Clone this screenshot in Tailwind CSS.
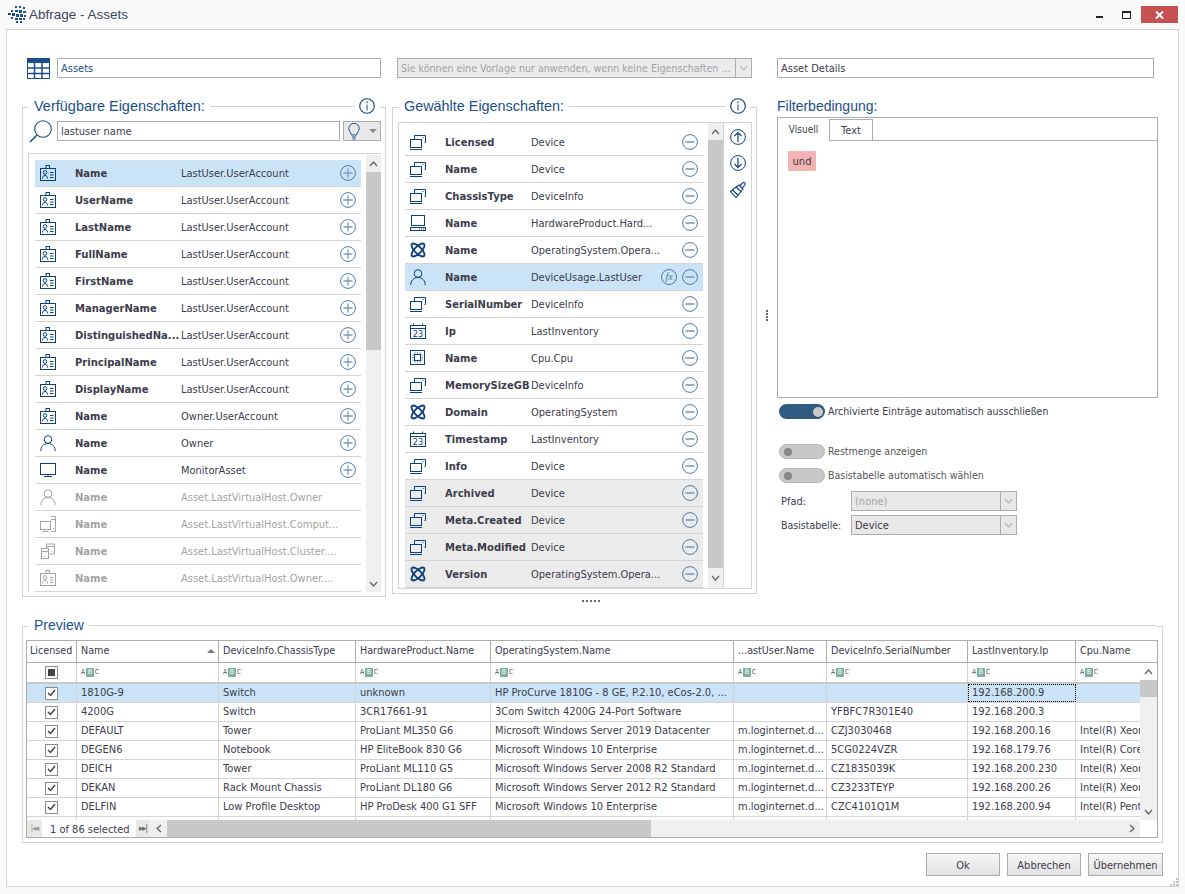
<!DOCTYPE html>
<html lang="de">
<head>
    <meta charset="UTF-8">
    <title>Abfrage - Assets</title>
    <script src="https://cdn.jsdelivr.net/npm/@tailwindcss/browser@4"></script>
</head>
<body class="bg-[#fafafa] text-[#3c3c4a] text-[11px] font-['DejaVu_Sans_Condensed','DejaVu_Sans',sans-serif]">

<!-- icon sprites -->
<svg class="hidden">
    <symbol id="i-badge" viewBox="0 0 16 16"><g fill="none" stroke="currentColor"><rect x=".5" y="3.5" width="15" height="12"/><rect x="6" y=".5" width="3.5" height="3"/><circle cx="5" cy="7.5" r="1.8"/><path d="M2.5 13.5c0-2 1-3 2.5-3s2.5 1 2.5 3M10 7.5h3.500M10 10h3.500M10 12.500h3.500"/></g></symbol>
    <symbol id="i-device" viewBox="0 0 16 16"><g fill="none" stroke="currentColor"><rect x=".5" y="5.500" width="11" height="8"/><path d="M0 15.500h12M4.500 5V1.500h11v7h-1M12.500 3.500h1"/></g></symbol>
    <symbol id="i-hw" viewBox="0 0 16 16"><g fill="none" stroke="currentColor"><rect x="1.500" y=".5" width="13" height="10"/><rect x=".5" y="12.500" width="15" height="3"/><path d="M9 14h1M11 14h1M13 14h1"/></g></symbol>
    <symbol id="i-os" viewBox="0 0 16 16"><g fill="none" stroke="currentColor" stroke-width="1.800"><ellipse cx="8" cy="8" rx="8.500" ry="3.400" transform="rotate(45 8 8)"/><ellipse cx="8" cy="8" rx="8.500" ry="3.400" transform="rotate(-45 8 8)"/></g></symbol>
    <symbol id="i-user" viewBox="0 0 16 16"><g fill="none" stroke="currentColor"><circle cx="8" cy="4.500" r="3.800"/><path d="M.8 16c0-4.500 3-7.500 7.200-7.500s7.200 3 7.200 7.500"/></g></symbol>
    <symbol id="i-cal" viewBox="0 0 16 16"><g fill="none" stroke="currentColor"><rect x=".5" y="2.500" width="15" height="13"/><path d="M.5 5.500h15M3.500 .5v2M12.500 .5v2"/></g><text x="8" y="14" font-size="9" text-anchor="middle" fill="currentColor" stroke="none">23</text></symbol>
    <symbol id="i-cpu" viewBox="0 0 16 16"><g fill="none" stroke="currentColor"><rect x=".5" y=".5" width="14" height="14"/><rect x="4.500" y="4.500" width="6" height="6"/><path d="M5 2.500v1M7.500 2.500v1M10 2.500v1M5 11.500v1M7.500 11.500v1M10 11.500v1M2.500 5h1M2.500 7.500h1M2.500 10h1M11.500 5h1M11.500 7.500h1M11.500 10h1"/></g></symbol>
    <symbol id="i-monitor" viewBox="0 0 16 16"><g fill="none" stroke="currentColor"><rect x=".5" y="1.500" width="15" height="11"/><path d="M8 12.500v2M4 14.500h8"/></g></symbol>
    <symbol id="i-computer" viewBox="0 0 16 16"><g fill="none" stroke="currentColor"><rect x=".5" y="5.500" width="10" height="8"/><path d="M2.500 15.500h6M11 .5h4.500v15H11M11 3.500h4.500M13 12.500h1"/></g></symbol>
    <symbol id="i-cluster" viewBox="0 0 16 16"><g fill="none" stroke="currentColor"><rect x="1.500" y="5.500" width="7" height="10"/><path d="M1.500 8.500h7M6.500 5V1h8v10h-5M6.500 3.500h8M4.500 13h1M11.500 8.500h1"/></g></symbol>
    <symbol id="i-plus" viewBox="0 0 16 16"><circle cx="8" cy="8" r="7.400" fill="none" stroke="#4f7aa5"/><path d="M8 3.500v9M3.500 8h9" stroke="#7d9bb8" stroke-width="1.300"/></symbol>
    <symbol id="i-minus" viewBox="0 0 16 16"><circle cx="8" cy="8" r="7.400" fill="none" stroke="#4f7aa5"/><path d="M3.500 8h9" stroke="#7d9bb8" stroke-width="1.600"/></symbol>
    <symbol id="i-info" viewBox="0 0 16 16"><circle cx="8" cy="8" r="7.300" fill="none" stroke="#0d3f78" stroke-width="1.100"/><path d="M8 6.500v6" stroke="#5f86ad" stroke-width="1.500"/><circle cx="8" cy="4.200" r="1" fill="#5f86ad"/></symbol>
    <symbol id="i-up" viewBox="0 0 16 16"><g fill="none" stroke="#0d3f78"><circle cx="8" cy="8" r="7.400"/><path d="M8 13V3.500M4.500 7 8 3.500 11.500 7" stroke-width="1.200"/></g></symbol>
    <symbol id="i-down" viewBox="0 0 16 16"><g fill="none" stroke="#0d3f78"><circle cx="8" cy="8" r="7.400"/><path d="M8 3v9.500M4.500 9 8 12.500 11.500 9" stroke-width="1.200"/></g></symbol>
    <symbol id="i-brush" viewBox="0 0 16 16"><g fill="none" stroke="#0d3f78" stroke-width="1.100"><path d="M.5 9.500 6 5l5 4.500-5 6-5.500-6zM6 5l3-2 4 4-2 2.500M2.500 8 8 13"/><path d="M10 3.500 13 .8c1.500-.8 2.700.5 2 2l-2.500 3"/></g></symbol>
</svg>

<div class="w-[1185px] h-[894px] flex flex-col overflow-hidden relative">
    <!-- title bar -->
    <div class="h-[29px] shrink-0 flex items-start">
        <svg class="ml-[8px] mt-[6px] w-[18px] h-[17px] text-[#1c4f8a]" viewBox="0 0 18 17" fill="currentColor">
            <rect x="7" y="0" width="2" height="2"/><rect x="11" y="0" width="2" height="2"/><rect x="15" y="1" width="2" height="2"/>
            <rect x="3" y="4" width="2" height="2"/><rect x="7" y="4" width="3" height="2"/><rect x="11" y="4" width="3" height="3"/><rect x="15" y="5" width="3" height="2"/>
            <rect x="0" y="7" width="3" height="2"/><rect x="4" y="7" width="3" height="3"/><rect x="8" y="8" width="3" height="3"/><rect x="12" y="8" width="3" height="3"/><rect x="16" y="9" width="2" height="2"/>
            <rect x="3" y="11" width="2" height="2"/><rect x="7" y="12" width="3" height="2"/><rect x="11" y="12" width="3" height="2"/><rect x="15" y="12" width="2" height="2"/>
            <rect x="8" y="15" width="2" height="2"/><rect x="12" y="15" width="2" height="2"/>
        </svg>
        <span class="ml-[3px] mt-[5px] text-[13.500px] leading-[20px] text-[#3d4757] font-['Liberation_Sans',sans-serif]">Abfrage - Assets</span>
        <div class="ml-auto flex items-start">
            <div class="w-[7px] h-[2px] bg-[#222] mt-[16px]"></div>
            <div class="w-[9px] h-[8px] border border-[#222] border-t-2 ml-[19px] mt-[11px]"></div>
            <div class="w-[37px] h-[17px] bg-[#c75050] ml-[10px] mt-[6px] mr-[7px] flex items-center justify-center">
                <svg class="w-[9px] h-[8px]" viewBox="0 0 9 8"><path d="M1 .5 8 7.500M8 .5 1 7.500" stroke="#fff" stroke-width="2"/></svg>
            </div>
        </div>
    </div>

    <!-- main panel -->
    <div class="mx-[6px] w-[1173px] h-[858px] shrink-0 bg-white border border-[#d4d4d4] px-[15px] pt-[28px]">
        <!-- top row -->
        <div class="flex h-[21px] pl-[5px]">
            <svg class="w-[23px] h-[21px] text-[#1c4f8a]" viewBox="0 0 23 21"><rect x=".5" y=".5" width="22" height="20" fill="none" stroke="currentColor"/><rect x="0" y="0" width="23" height="5" fill="currentColor"/><path d="M0 10h23M0 15.500h23M7.500 5v16M15 5v16" stroke="currentColor" stroke-width="1.500"/></svg>
            <input class="ml-[7px] w-[324px] h-[20px] border border-[#acacac] px-[3px] pt-px text-[#1c4f8a] outline-none" value="Assets">
            <div class="ml-[16px] w-[355px] h-[20px] border border-[#acacac] bg-[#ebebeb] flex items-center text-[#a3a3a3] text-[10.600px] pl-[3px]">
                <span class="flex-1 whitespace-nowrap overflow-hidden pt-px">Sie können eine Vorlage nur anwenden, wenn keine Eigenschaften ...</span>
                <span class="w-[16px] h-full border-l border-[#acacac] flex items-center justify-center"><svg class="w-[9px] h-[6px]" viewBox="0 0 9 6"><path d="M1 1l3.500 4L8 1" fill="none" stroke="#c4c4c4" stroke-width="1.300"/></svg></span>
            </div>
            <input class="ml-[25px] w-[377px] h-[20px] border border-[#acacac] px-[3px] pt-px outline-none" value="Asset Details">
        </div>

        <!-- three columns -->
        <div class="flex mt-[19px] h-[495px]">
            <!-- available -->
            <div class="w-[364px] flex flex-col">
                <div class="flex items-center h-[16px]">
                    <div class="w-[7px] h-[7px] border-l border-t border-[#d4d4d4] self-end"></div>
                    <span class="mx-[5px] text-[14.500px] leading-[16px] text-[#1c4f8a] whitespace-nowrap font-['Liberation_Sans',sans-serif]">Verfügbare Eigenschaften:</span>
                    <div class="flex-1 h-px bg-[#d4d4d4]"></div>
                    <svg class="w-[16px] h-[16px] mx-[4px]"><use href="#i-info"/></svg>
                    <div class="w-[7px] h-[7px] border-r border-t border-[#d4d4d4] self-end"></div>
                </div>
                <div class="flex-1 border-x border-b border-[#d4d4d4] flex flex-col pt-[7px] pb-[4px]">
                    <div class="flex h-[20px] pl-[6px]">
                        <svg class="w-[23px] h-[23px] -mt-[1px]" viewBox="0 0 23 23"><g fill="none" stroke="#1c4f8a"><circle cx="14" cy="9" r="8.300" stroke-width="1.100"/><path d="M8 15 1 22" stroke-width="1.600"/></g></svg>
                        <input class="ml-[5px] w-[283px] h-[20px] border border-[#acacac] px-[3px] outline-none" value="lastuser name">
                        <div class="ml-[3px] w-[38px] h-[20px] border border-[#acacac] bg-[#e8e8e8] flex items-center">
                            <svg class="ml-[4px] w-[12px] h-[17px]" viewBox="0 0 12 17"><path d="M3.500 12C3 9 .8 8.500.8 5.500a5.200 5.200 0 0 1 10.400 0c0 3-2.200 3.500-2.700 6.500zM4 14h4M4.500 16h3" fill="none" stroke="#1c4f8a"/></svg>
                            <span class="ml-[9px] w-0 h-0 border-x-[4px] border-x-transparent border-t-[4px] border-t-[#8a8a8a]"></span>
                        </div>
                    </div>
                    <div class="ml-[5px] mt-[12px] w-[353px] flex-1 border-t border-l border-[#d4d4d4] flex overflow-hidden">
                        <div id="availList" class="ml-[6px] mt-[6px] w-[326px] overflow-hidden"></div>
                        <div class="ml-[5px] mt-[1px] w-[15px] bg-[#efefef] flex flex-col">
                            <div class="h-[17px] flex items-center justify-center"><svg class="w-[9px] h-[6px]" viewBox="0 0 9 6"><path d="M1 5l3.500-4L8 5" fill="none" stroke="#666" stroke-width="1.300"/></svg></div>
                            <div class="h-[178px] bg-[#c8c8c8]"></div>
                            <div class="mt-auto h-[17px] flex items-center justify-center"><svg class="w-[9px] h-[6px]" viewBox="0 0 9 6"><path d="M1 1l3.500 4L8 1" fill="none" stroke="#666" stroke-width="1.300"/></svg></div>
                        </div>
                    </div>
                </div>
            </div>

            <!-- selected -->
            <div class="ml-[6px] w-[365px] flex flex-col">
                <div class="flex items-center h-[16px]">
                    <div class="w-[7px] h-[7px] border-l border-t border-[#d4d4d4] self-end"></div>
                    <span class="mx-[5px] text-[14.400px] leading-[16px] text-[#1c4f8a] whitespace-nowrap font-['Liberation_Sans',sans-serif]">Gewählte Eigenschaften:</span>
                    <div class="flex-1 h-px bg-[#d4d4d4]"></div>
                    <svg class="w-[16px] h-[16px] mx-[4px]"><use href="#i-info"/></svg>
                    <div class="w-[7px] h-[7px] border-r border-t border-[#d4d4d4] self-end"></div>
                </div>
                <div class="flex-1 border-x border-b border-[#d4d4d4] pt-[8px] pb-[4px] flex flex-col">
                    <div class="ml-[5px] w-[354px] flex-1 border border-[#d4d4d4] flex overflow-hidden">
                        <div id="selList" class="ml-[6px] mt-[6px] w-[298px] overflow-hidden"></div>
                        <div class="ml-[5px] w-[15px] bg-[#efefef] flex flex-col">
                            <div class="h-[17px] flex items-center justify-center"><svg class="w-[9px] h-[6px]" viewBox="0 0 9 6"><path d="M1 5l3.500-4L8 5" fill="none" stroke="#666" stroke-width="1.300"/></svg></div>
                            <div class="flex-1 bg-[#c8c8c8]"></div>
                            <div class="h-[20px] flex items-center justify-center"><svg class="w-[9px] h-[6px]" viewBox="0 0 9 6"><path d="M1 1l3.500 4L8 1" fill="none" stroke="#666" stroke-width="1.300"/></svg></div>
                        </div>
                        <div class="flex-1 border-l border-[#d4d4d4] flex flex-col items-center pt-[6px]">
                            <svg class="w-[16px] h-[16px]"><use href="#i-up"/></svg>
                            <svg class="w-[16px] h-[16px] mt-[10px]"><use href="#i-down"/></svg>
                            <svg class="w-[16px] h-[16px] mt-[11px]"><use href="#i-brush"/></svg>
                        </div>
                    </div>
                </div>
            </div>

            <!-- splitter -->
            <div class="w-[20px] flex flex-col items-center pt-[212px] gap-[1px]">
                <div class="w-[2px] h-[2px] bg-[#666]"></div><div class="w-[2px] h-[2px] bg-[#666]"></div><div class="w-[2px] h-[2px] bg-[#666]"></div><div class="w-[2px] h-[2px] bg-[#666]"></div>
            </div>

            <!-- filter -->
            <div class="w-[381px] flex flex-col">
                <div class="h-[16px] text-[14px] leading-[16px] text-[#1c4f8a] font-['Liberation_Sans',sans-serif]">Filterbedingung:</div>
                <div class="mt-[3px] h-[281px] border border-[#acacac] flex flex-col">
                    <div class="flex h-[23px] shrink-0">
                        <div class="w-[51px] text-center leading-[24px] text-[10px]">Visuell</div>
                        <div class="w-[44px] mt-[1px] border border-[#acacac] text-center leading-[22px]">Text</div>
                        <div class="flex-1 border-b border-[#acacac]"></div>
                    </div>
                    <div class="ml-[10px] mt-[10px] w-[28px] h-[20px] bg-[#f4b4b4] rounded-[1px] text-center leading-[22px]">und</div>
                </div>
                <div class="flex items-center mt-[6px] ml-[2px] h-[15px] gap-[3px] text-[10.500px]">
                    <div class="w-[46px] h-[15px] rounded-full bg-[#2f5b80] flex items-center justify-end pr-[2px]"><div class="w-[10px] h-[10px] rounded-full bg-[#c8c8c8]"></div></div>
                    <span class="pt-px">Archivierte Einträge automatisch ausschließen</span>
                </div>
                <div class="flex items-center mt-[25px] ml-[2px] h-[15px] gap-[3px] text-[#555] text-[10.500px]">
                    <div class="w-[46px] h-[15px] rounded-full bg-[#c8c8c8] border border-[#b4b4b4] flex items-center pl-[4px]"><div class="w-[8px] h-[8px] rounded-full bg-[#888]"></div></div>
                    <span class="pt-px">Restmenge anzeigen</span>
                </div>
                <div class="flex items-center mt-[9px] ml-[2px] h-[15px] gap-[3px] text-[#555] text-[10.500px]">
                    <div class="w-[46px] h-[15px] rounded-full bg-[#c8c8c8] border border-[#b4b4b4] flex items-center pl-[4px]"><div class="w-[8px] h-[8px] rounded-full bg-[#888]"></div></div>
                    <span class="pt-px">Basistabelle automatisch wählen</span>
                </div>
                <div class="flex items-center mt-[8px] pl-[4px] h-[20px]">
                    <span class="w-[70px] pt-[2px]">Pfad:</span>
                    <div class="w-[166px] h-[20px] border border-[#acacac] bg-[#e8e8e8] flex items-center pl-[3px] text-[#a3a3a3]">
                        <span class="flex-1 pt-[2px]">(none)</span>
                        <span class="w-[16px] h-full border-l border-[#acacac] flex items-center justify-center"><svg class="w-[9px] h-[6px]" viewBox="0 0 9 6"><path d="M1 1l3.500 4L8 1" fill="none" stroke="#b8b8b8" stroke-width="1.300"/></svg></span>
                    </div>
                </div>
                <div class="flex items-center mt-[4px] pl-[4px] h-[20px]">
                    <span class="w-[70px] pt-[2px] whitespace-nowrap text-[10.500px]">Basistabelle:</span>
                    <div class="w-[166px] h-[20px] border border-[#acacac] bg-[#e8e8e8] flex items-center pl-[3px]">
                        <span class="flex-1 pt-[2px]">Device</span>
                        <span class="w-[16px] h-full border-l border-[#acacac] flex items-center justify-center"><svg class="w-[9px] h-[6px]" viewBox="0 0 9 6"><path d="M1 1l3.500 4L8 1" fill="none" stroke="#b8b8b8" stroke-width="1.300"/></svg></span>
                    </div>
                </div>
            </div>
        </div>

        <!-- horizontal splitter -->
        <div class="h-[24px] flex justify-center pt-[7px] gap-[2px] pr-[12px] pl-[9px]">
            <div class="w-[2px] h-[2px] bg-[#666]"></div><div class="w-[2px] h-[2px] bg-[#666]"></div><div class="w-[2px] h-[2px] bg-[#666]"></div><div class="w-[2px] h-[2px] bg-[#666]"></div><div class="w-[2px] h-[2px] bg-[#666]"></div>
        </div>

        <!-- preview -->
        <div class="w-[1141px] flex flex-col">
            <div class="flex items-center h-[16px]">
                <div class="w-[7px] h-[7px] border-l border-t border-[#d4d4d4] self-end"></div>
                <span class="mx-[5px] text-[14px] leading-[16px] text-[#1c4f8a] font-['Liberation_Sans',sans-serif]">Preview</span>
                <div class="flex-1 h-px bg-[#d4d4d4]"></div>
                <div class="w-[7px] h-[7px] border-r border-t border-[#d4d4d4] self-end"></div>
            </div>
            <div class="border-x border-b border-[#d4d4d4] pt-[7px] pb-[4px] pl-[3px]">
                <div class="relative w-[1132px] h-[198px] border border-[#acacac] flex flex-col overflow-hidden">
                    <div id="grid" class="h-[179px] overflow-hidden shrink-0"></div>
                    <!-- vertical scrollbar over the grid -->
                    <div class="absolute right-0 top-[22px] w-[17px] h-[157px] bg-[#efefef] flex flex-col">
                        <div class="h-[17px] bg-white flex items-center justify-center"><svg class="w-[9px] h-[6px]" viewBox="0 0 9 6"><path d="M1 5l3.500-4L8 5" fill="none" stroke="#666" stroke-width="1.300"/></svg></div>
                        <div class="h-[17px] bg-[#c8c8c8]"></div>
                        <div class="mt-auto h-[17px] flex items-center justify-center"><svg class="w-[9px] h-[6px]" viewBox="0 0 9 6"><path d="M1 1l3.500 4L8 1" fill="none" stroke="#666" stroke-width="1.300"/></svg></div>
                    </div>
                    <!-- footer -->
                    <div class="h-[17px] flex items-stretch">
                        <div class="w-[15px] bg-[#e8e8e8] flex items-center justify-center text-[#999] text-[9px] tracking-[-1px]">|◂◂</div>
                        <div class="w-[94px] pl-[8px] leading-[19px] whitespace-nowrap">1 of 86 selected</div>
                        <div class="w-[14px] bg-[#e8e8e8] flex items-center justify-center text-[#666] text-[9px] tracking-[-1px]">▸▸|</div>
                        <div class="w-[17px] bg-[#efefef] flex items-center justify-center"><svg class="w-[6px] h-[9px]" viewBox="0 0 6 9"><path d="M5 1 1 4.500 5 8" fill="none" stroke="#666" stroke-width="1.300"/></svg></div>
                        <div class="w-[484px] bg-[#c8c8c8]"></div>
                        <div class="flex-1 bg-[#efefef] flex items-center justify-end pr-[5px]"><svg class="w-[6px] h-[9px]" viewBox="0 0 6 9"><path d="M1 1l4 3.500L1 8" fill="none" stroke="#666" stroke-width="1.300"/></svg></div>
                        <div class="w-[17px] bg-white"></div>
                    </div>
                </div>
            </div>
            <div class="flex justify-end gap-[7px] mt-[10px]">
                <button class="w-[74px] h-[23px] pt-[3px] border border-[#acacac] bg-linear-to-b from-[#f6f6f6] to-[#e2e2e2]">Ok</button>
                <button class="w-[74px] h-[23px] pt-[3px] border border-[#acacac] bg-linear-to-b from-[#f6f6f6] to-[#e2e2e2]">Abbrechen</button>
                <button class="w-[75px] h-[23px] pt-[3px] border border-[#acacac] bg-linear-to-b from-[#f6f6f6] to-[#e2e2e2]">Übernehmen</button>
            </div>
        </div>
    </div>

    <!-- resize grip -->
    <svg class="absolute left-[1170px] top-[878px] w-[9px] h-[9px]" viewBox="0 0 9 9" fill="#c4c4c4">
        <rect x="6" y="0" width="2" height="2"/><rect x="3" y="3" width="2" height="2"/><rect x="6" y="3" width="2" height="2"/><rect x="0" y="6" width="2" height="2"/><rect x="3" y="6" width="2" height="2"/><rect x="6" y="6" width="2" height="2"/>
    </svg>
</div>

<script>
    const icon = (id, cls) => `<svg class="${cls}"><use href="#i-${id}"/></svg>`;

    const avail = [
        ['badge', 'Name', 'LastUser.UserAccount'], ['badge', 'UserName', 'LastUser.UserAccount'],
        ['badge', 'LastName', 'LastUser.UserAccount'], ['badge', 'FullName', 'LastUser.UserAccount'],
        ['badge', 'FirstName', 'LastUser.UserAccount'], ['badge', 'ManagerName', 'LastUser.UserAccount'],
        ['badge', 'DistinguishedNa...', 'LastUser.UserAccount'], ['badge', 'PrincipalName', 'LastUser.UserAccount'],
        ['badge', 'DisplayName', 'LastUser.UserAccount'], ['badge', 'Name', 'Owner.UserAccount'],
        ['user', 'Name', 'Owner'], ['monitor', 'Name', 'MonitorAsset'],
        ['user', 'Name', 'Asset.LastVirtualHost.Owner', 1], ['computer', 'Name', 'Asset.LastVirtualHost.Comput...', 1],
        ['cluster', 'Name', 'Asset.LastVirtualHost.Cluster....', 1], ['badge', 'Name', 'Asset.LastVirtualHost.Owner....', 1],
    ];

    document.getElementById('availList').innerHTML = avail.map(([ic, name, src, off], i) => `
        <div class="h-[27px] flex items-center border-b border-[#d4d4d4] ${i === 0 ? 'bg-[#cae3f7]' : ''} ${off ? 'text-[#a3a3a3]' : ''}">
            ${icon(ic, 'ml-[5px] w-[16px] h-[16px] shrink-0 ' + (off ? 'text-[#a3a3a3]' : 'text-[#0d3f78]'))}
            <span class="ml-[19px] w-[106px] shrink-0 font-bold text-[10px] font-['DejaVu_Sans',sans-serif] whitespace-nowrap">${name}</span>
            <span class="w-[159px] pt-[2px] shrink-0 whitespace-nowrap">${src}</span>
            ${off ? '' : icon('plus', 'w-[16px] h-[16px] shrink-0')}
        </div>`).join('');

    const sel = [
        ['device', 'Licensed', 'Device'], ['device', 'Name', 'Device'], ['device', 'ChassisType', 'DeviceInfo'],
        ['hw', 'Name', 'HardwareProduct.Hard...'], ['os', 'Name', 'OperatingSystem.Opera...'],
        ['user', 'Name', 'DeviceUsage.LastUser', 'sel'], ['device', 'SerialNumber', 'DeviceInfo'],
        ['cal', 'Ip', 'LastInventory'], ['cpu', 'Name', 'Cpu.Cpu'], ['device', 'MemorySizeGB', 'DeviceInfo'],
        ['os', 'Domain', 'OperatingSystem'], ['cal', 'Timestamp', 'LastInventory'], ['device', 'Info', 'Device'],
        ['device', 'Archived', 'Device', 'sys'], ['device', 'Meta.Created', 'Device', 'sys'],
        ['device', 'Meta.Modified', 'Device', 'sys'], ['os', 'Version', 'OperatingSystem.Opera...', 'sys'],
    ];

    document.getElementById('selList').innerHTML = sel.map(([ic, name, src, kind]) => `
        <div class="h-[27px] flex items-center border-b border-[#d4d4d4] ${kind === 'sel' ? 'bg-[#cae3f7]' : kind === 'sys' ? 'bg-[#ebebeb]' : ''}">
            ${icon(ic, 'ml-[5px] w-[16px] h-[16px] shrink-0 text-[#0d3f78]')}
            <span class="ml-[19px] w-[86px] shrink-0 font-bold text-[10px] font-['DejaVu_Sans',sans-serif] whitespace-nowrap">${name}</span>
            <span class="flex-1 pt-[2px] whitespace-nowrap">${src}</span>
            ${kind === 'sel' ? `<span class="w-[16px] h-[16px] rounded-full border border-[#4f7aa5] text-[#4f7aa5] text-[10px] italic leading-[13px] text-center font-['Liberation_Serif',serif] mr-[5px] shrink-0">fx</span>` : ''}
            ${icon('minus', 'w-[16px] h-[16px] mr-[5px] shrink-0')}
        </div>`).join('');

    const widths = ['w-[50px]', 'w-[142px]', 'w-[137px]', 'w-[135px]', 'w-[243px]', 'w-[93px]', 'w-[141px]', 'w-[108px]', 'w-[82px]'];
    const heads = ['Licensed', 'Name', 'DeviceInfo.ChassisType', 'HardwareProduct.Name', 'OperatingSystem.Name', '...astUser.Name', 'DeviceInfo.SerialNumber', 'LastInventory.Ip', 'Cpu.Name'];
    const mail = 'm.loginternet.d...';
    const rows = [
        ['1810G-9', 'Switch', 'unknown', 'HP ProCurve 1810G - 8 GE, P.2.10, eCos-2.0, ...', '', '', '192.168.200.9', ''],
        ['4200G', 'Switch', '3CR17661-91', '3Com Switch 4200G 24-Port Software', '', 'YFBFC7R301E40', '192.168.200.3', ''],
        ['DEFAULT', 'Tower', 'ProLiant ML350 G6', 'Microsoft Windows Server 2019 Datacenter', mail, 'CZJ3030468', '192.168.200.16', 'Intel(R) Xeon'],
        ['DEGEN6', 'Notebook', 'HP EliteBook 830 G6', 'Microsoft Windows 10 Enterprise', mail, '5CG0224VZR', '192.168.179.76', 'Intel(R) Core'],
        ['DEICH', 'Tower', 'ProLiant ML110 G5', 'Microsoft Windows Server 2008 R2 Standard', mail, 'CZ1835039K', '192.168.200.230', 'Intel(R) Xeon'],
        ['DEKAN', 'Rack Mount Chassis', 'ProLiant DL180 G6', 'Microsoft Windows Server 2012 R2 Standard', mail, 'CZ3233TEYP', '192.168.200.26', 'Intel(R) Xeon'],
        ['DELFIN', 'Low Profile Desktop', 'HP ProDesk 400 G1 SFF', 'Microsoft Windows 10 Enterprise', mail, 'CZC4101Q1M', '192.168.200.94', 'Intel(R) Pent'],
        ['', '', '', '', '', '', '', ''],
    ];
    const check = `<span class="w-[13px] h-[13px] border border-[#8c8c8c] flex items-center justify-center bg-white"><svg class="w-[9px] h-[8px]" viewBox="0 0 9 8"><path d="M1 4l2.500 2.500L8 1" fill="none" stroke="#444" stroke-width="1.500"/></svg></span>`;
    const abc = `<span class="text-[7px] leading-[9px] flex items-center text-[#555] ml-[4px]">A<span class="bg-[#7fb0a0] text-white px-[1.500px] mx-[1px]">B</span>C</span>`;

    const headRow = `<div class="flex h-[22px] border-b border-[#acacac] text-[10.700px]">${heads.map((h, i) => `
        <div class="${widths[i]} shrink-0 border-r border-[#acacac] flex items-center whitespace-nowrap overflow-hidden ${i === 0 ? 'pl-[3px]' : 'pl-[4px]'} relative">${h}${i === 1 ? '<span class="absolute right-[3px] top-[8px] w-0 h-0 border-x-[4px] border-x-transparent border-b-[4px] border-b-[#777]"></span>' : ''}</div>`).join('')}</div>`;

    const filterRow = `<div class="flex h-[21px] border-b-2 border-[#c8c8c8]">${widths.map((w, i) => `
        <div class="${w} shrink-0 border-r border-[#d4d4d4] flex items-center ${i === 0 ? 'justify-center' : ''}">${i === 0
            ? '<span class="w-[13px] h-[13px] border border-[#8c8c8c] flex items-center justify-center"><span class="w-[7px] h-[7px] bg-[#444]"></span></span>'
            : abc}</div>`).join('')}</div>`;

    const dataRows = rows.map((r, ri) => `<div class="flex h-[19px] border-b border-[#d4d4d4] ${ri === 0 ? 'bg-[#cae3f7]' : ''}">${widths.map((w, i) => `
        <div class="${w} shrink-0 border-r border-[#d4d4d4] flex items-center whitespace-nowrap overflow-hidden ${i === 0 ? 'justify-center' : 'pl-[4px]'} ${ri === 0 && i === 7 ? 'outline-1 outline-dotted outline-black -outline-offset-1' : ''}">${i === 0 ? check : (r[i - 1] || '')}</div>`).join('')}</div>`).join('');

    document.getElementById('grid').innerHTML = headRow + filterRow + dataRows;
</script>
</body>
</html>
